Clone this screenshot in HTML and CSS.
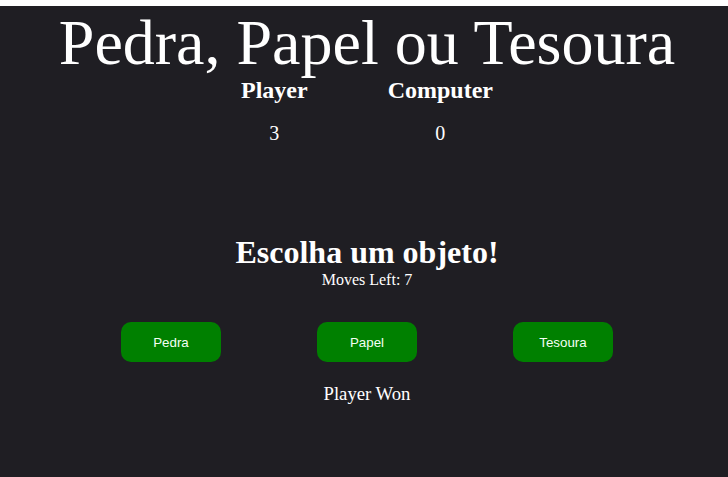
FILE: index.html
```html
<!DOCTYPE html>
<html lang="pt">
<head>
<meta charset="utf-8">
<title>Pedra, Papel ou Tesoura</title>
<link rel="stylesheet" href="styles.css">
</head>
<body>
<div class="app">
  <h1 class="title">Pedra, Papel ou Tesoura</h1>
  <div class="scoreboard">
    <div class="score-col">
      <h2 class="score-label">Player</h2>
      <div class="score-value">3</div>
    </div>
    <div class="score-col">
      <h2 class="score-label">Computer</h2>
      <div class="score-value">0</div>
    </div>
  </div>
  <h2 class="prompt">Escolha um objeto!</h2>
  <div class="moves">Moves Left: 7</div>
  <div class="options">
    <button class="option">Pedra</button>
    <button class="option">Papel</button>
    <button class="option">Tesoura</button>
  </div>
  <div class="result">Player Won</div>
</div>
</body>
</html>
```
FILE: styles.css
```css
html, body {
  margin: 0;
  padding: 0;
  background: #ffffff;
}

.app {
  margin-top: 6px;
  min-height: calc(100vh - 6px);
  box-sizing: border-box;
  background: #1f1e23;
  color: #ffffff;
  font-family: "Liberation Serif", "Times New Roman", serif;
  padding: 5px 0 0 6px;
  display: flex;
  flex-direction: column;
  align-items: center;
  text-align: center;
}

.title {
  margin: 0;
  font-size: 64px;
  line-height: 64px;
  font-weight: normal;
}

.scoreboard {
  display: flex;
  gap: 80px;
  margin-top: 3px;
}

.score-col {
  display: flex;
  flex-direction: column;
  align-items: center;
}

.score-label {
  margin: 0;
  font-size: 24px;
  line-height: 24px;
  font-weight: bold;
}

.score-value {
  margin-top: 21px;
  font-size: 20px;
  line-height: 20px;
}

.prompt {
  margin: 93px 0 0;
  font-size: 32px;
  line-height: 32px;
  font-weight: bold;
}

.moves {
  margin-top: 4px;
  font-size: 16px;
  line-height: 16px;
}

.options {
  display: flex;
  gap: 96px;
  margin-top: 34px;
}

.option {
  width: 100px;
  height: 40px;
  border: none;
  border-radius: 10px;
  background: #008000;
  color: #f4fff4;
  font-family: "Liberation Sans", Arial, sans-serif;
  font-size: 13.33px;
  padding: 0;
}

.result {
  margin-top: 23px;
  font-size: 18.72px;
  line-height: 18.72px;
}
```
